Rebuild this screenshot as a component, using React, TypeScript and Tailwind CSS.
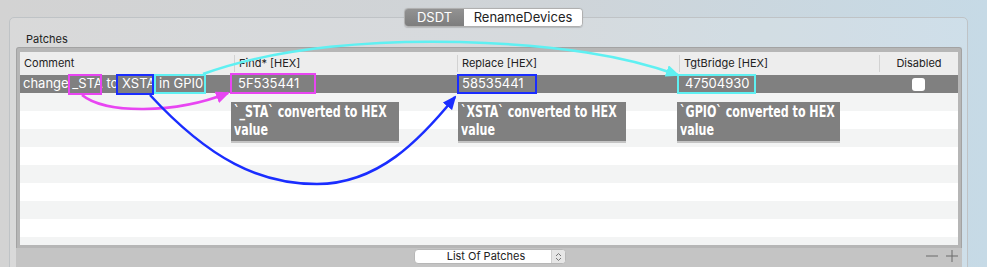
import React from 'react';

const ui = { fontFamily: 'Inter, "Liberation Sans", sans-serif' };
const note = { fontFamily: '"DejaVu Sans Condensed", "DejaVu Sans", sans-serif' };

const columns = [
  { label: 'Comment', w: 'w-[214px]' },
  { label: 'Find* [HEX]', w: 'w-[223px]' },
  { label: 'Replace [HEX]', w: 'w-[222px]' },
  { label: 'TgtBridge [HEX]', w: 'w-[200px]' },
];

const notes = [
  { x: 'left-[231px] w-[168px]', text: '`_STA` converted to HEX' },
  { x: 'left-[458px] w-[168px]', text: '`XSTA` converted to HEX' },
  { x: 'left-[677px] w-[163px]', text: '`GPIO` converted to HEX' },
];

function Annotations() {
  return (
    <svg className="absolute inset-0 pointer-events-none" width={987} height={267} viewBox="0 0 987 267">
      <defs>
        <marker id="hm" markerWidth="14" markerHeight="12" refX="12" refY="6" orient="auto" markerUnits="userSpaceOnUse">
          <path d="M0,0 L14,6 L0,12 z" fill="#e845f2" />
        </marker>
        <marker id="hb" markerWidth="14" markerHeight="12" refX="12" refY="6" orient="auto" markerUnits="userSpaceOnUse">
          <path d="M0,0 L14,6 L0,12 z" fill="#1a2dff" />
        </marker>
        <marker id="hc" markerWidth="14" markerHeight="12" refX="12" refY="6" orient="auto" markerUnits="userSpaceOnUse">
          <path d="M0,0 L14,6 L0,12 z" fill="#5ff0f2" />
        </marker>
      </defs>

      {/* highlight boxes */}
      <rect x={69} y={75} width={32} height={19} fill="none" stroke="#e845f2" strokeWidth={2} />
      <rect x={117} y={75} width={36} height={19} fill="none" stroke="#1a2dff" strokeWidth={2} />
      <rect x={155} y={75} width={50} height={18} fill="none" stroke="#5ff0f2" strokeWidth={2} />
      <rect x={231} y={74} width={84} height={19} fill="none" stroke="#e845f2" strokeWidth={2} />
      <rect x={458} y={75} width={78} height={18} fill="none" stroke="#1a2dff" strokeWidth={2} />
      <rect x={678} y={75} width={77} height={18} fill="none" stroke="#5ff0f2" strokeWidth={2} />

      {/* arrows */}
      <path d="M82 95 C105 114, 175 114, 228 93" fill="none" stroke="#e845f2" strokeWidth={2.5} markerEnd="url(#hm)" />
      <path d="M150 95 C210 160, 260 184, 317 184 C378 184, 420 140, 455 97" fill="none" stroke="#1a2dff" strokeWidth={2.5} markerEnd="url(#hb)" />
      <path d="M203 74 C280 46, 380 40, 460 42 C560 45, 625 56, 678 75" fill="none" stroke="#5ff0f2" strokeWidth={2.5} markerEnd="url(#hc)" />
    </svg>
  );
}

export default function App() {
  const rows = Array.from({ length: 9 });

  return (
    <div
      className="relative w-[987px] h-[267px] overflow-hidden bg-[linear-gradient(90deg,#d3d3d3_0%,#cfd4d8_55%,#c6dae6_100%)]"
      style={ui}
    >
      {/* segmented control */}
      <div className="relative z-10 mt-[8px] mx-auto w-[179px] flex h-[19px] rounded-[4px] border border-[#b0b0b0] overflow-hidden text-[13px] leading-[17px] shadow-[0_0.5px_1px_rgba(0,0,0,0.15)]">
        <div className="w-[59px] flex items-center justify-center bg-[linear-gradient(#929292,#7d7d7d)] text-white">DSDT</div>
        <div className="flex-1 flex items-center justify-center bg-white text-[#222]">RenameDevices</div>
      </div>

      {/* panel */}
      <div className="ml-[9px] -mt-[10px] w-[959px] h-[260px] rounded-[5px] border border-[#bfc3c6] bg-white/15 pt-[14px] px-[6px]">
        <div className="pl-[10px] h-[14px] text-[11px] leading-[14px] text-[#222]">Patches</div>

        <div className="mt-[1px] w-[946px] rounded-t-[3px] border border-b-0 border-[#a3a3a3] bg-[#b6b6b6] pt-[4px] px-[3px] pb-[3px]">
          <div className="h-[193px] overflow-hidden bg-white">
            {/* header */}
            <div className="flex h-[23px] bg-[#ededed] text-[11px] text-[#222] items-center">
              {columns.map((c, i) => (
                <div key={c.label} className={`${c.w} h-[17px] flex items-center ${i > 0 ? 'border-l border-[#d2d2d2] pl-[4px]' : 'pl-[4px]'}`}>
                  {c.label}
                </div>
              ))}
              <div className="flex-1 h-[17px] flex items-center justify-center border-l border-[#d2d2d2]">Disabled</div>
            </div>

            {/* selected row */}
            <div className="flex h-[18px] bg-[#808080] text-white text-[13px] items-center">
              <div className="w-[214px] pl-[3px] whitespace-nowrap">change _STA to XSTA in GPI0</div>
              <div className="w-[223px] pl-[4px]">5F535441</div>
              <div className="w-[222px] pl-[5px]">58535441</div>
              <div className="w-[200px] pl-[6px]">47504930</div>
              <div className="flex-1 flex justify-center">
                <div className="w-[13px] h-[13px] rounded-[3px] bg-white" />
              </div>
            </div>

            {rows.map((_, i) => (
              <div key={i} className={`h-[18px] ${i % 2 === 0 ? 'bg-[#f3f4f4]' : 'bg-white'}`} />
            ))}
          </div>
        </div>

        {/* bottom bar */}
        <div className="w-[946px] h-[22px] bg-[#c4c4c4] flex items-start pt-[1px]">
          <div className="ml-[398px] w-[152px] h-[15px] flex rounded-[4px] bg-white border border-[#b7b7b7] overflow-hidden text-[11px] leading-[13px] text-[#222]">
            <div className="flex-1 flex items-center justify-center pl-[6px]">List Of Patches</div>
            <div className="w-[14px] bg-[#e6e6e6] border-l border-[#cfcfcf] flex items-center justify-center">
              <svg width="7" height="10" viewBox="0 0 7 10">
                <path d="M1 4 L3.5 1.5 L6 4 M1 6 L3.5 8.5 L6 6" fill="none" stroke="#777" strokeWidth="1" />
              </svg>
            </div>
          </div>
          <div className="ml-auto mr-[4px] mt-[1px] flex items-center gap-[8px]">
            <svg width="12" height="12" viewBox="0 0 12 12">
              <path d="M0 6 H12" stroke="#6a6a6a" strokeWidth="1" />
            </svg>
            <svg width="12" height="12" viewBox="0 0 12 12">
              <path d="M0 6 H12 M6 0 V12" stroke="#6a6a6a" strokeWidth="1" />
            </svg>
          </div>
        </div>
      </div>

      {/* annotation labels */}
      {notes.map((n) => (
        <div
          key={n.text}
          className={`absolute top-[102px] h-[41px] ${n.x} bg-[#808080] border-b-2 border-[#c4c4c4] pl-[3px] pt-[1px] text-white font-bold text-[16px] leading-[18px] overflow-hidden`}
          style={note}
        >
          <div className="origin-left scale-x-[0.77] whitespace-nowrap">{n.text}</div>
          <div className="origin-left scale-x-[0.77] whitespace-nowrap">value</div>
        </div>
      ))}

      <Annotations />
    </div>
  );
}
